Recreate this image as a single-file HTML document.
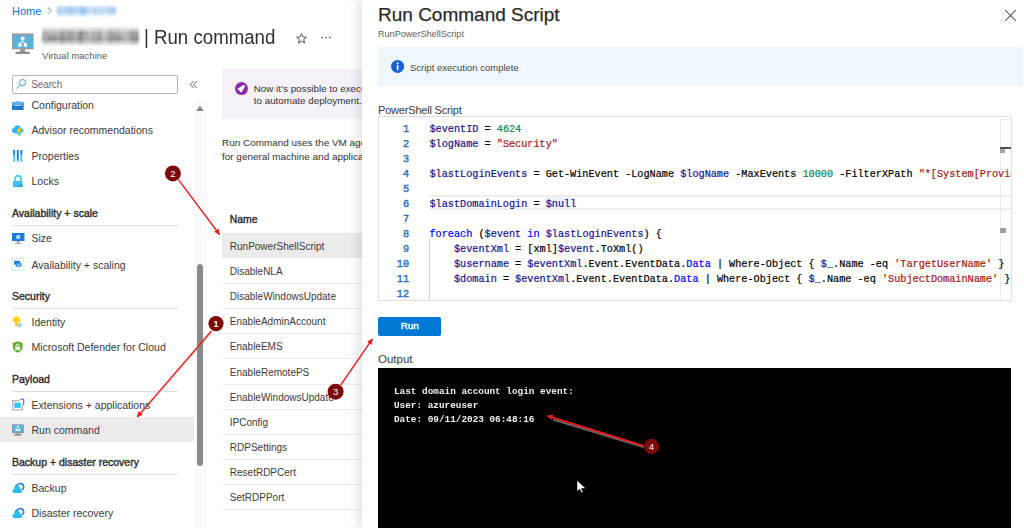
<!DOCTYPE html>
<html><head><meta charset="utf-8">
<style>
*{margin:0;padding:0;box-sizing:border-box}
html,body{width:1024px;height:528px;overflow:hidden;background:#fff}
body{position:relative;font-family:"Liberation Sans",sans-serif;color:#323130}
.a{position:absolute;white-space:pre}
.mi{position:absolute;left:31.5px;font-size:10.5px;line-height:14px;color:#3b3a39;white-space:pre}
.hd{position:absolute;left:12px;font-size:10.5px;font-weight:400;line-height:14px;color:#323130;-webkit-text-stroke:.42px #323130;white-space:pre}
.ln{position:absolute;left:12px;width:166px;height:1px;background:#e1dfdd}
.ic{position:absolute;left:12px;width:13px;height:13px}
.row{position:absolute;left:222px;width:140px;height:26px;border-bottom:1px solid #edebe9}
.row span{position:absolute;left:7.8px;top:7px;font-size:10px;line-height:14px;white-space:pre;color:#3b3a39}
#panel{position:absolute;left:362px;top:0;width:662px;height:528px;background:#fff;box-shadow:-4px 0 10px rgba(0,0,0,.11)}
.code{position:absolute;left:429.5px;font-family:"Liberation Mono",monospace;font-size:10.2px;line-height:15px;white-space:pre;color:#000;-webkit-text-stroke:.2px}
.num{position:absolute;left:380px;width:29px;text-align:right;font-family:"Liberation Mono",monospace;font-size:10.2px;font-weight:400;line-height:15px;color:#2a72c2;-webkit-text-stroke:.45px #2a72c2}
.v{color:#14148f}.k{color:#0000ff}.s{color:#a31515}.n{color:#098658}
</style></head><body>

<!-- breadcrumb -->
<div class="a" style="left:12px;top:4px;font-size:11px;line-height:14px;color:#0078d4">Home</div>
<svg class="a" style="left:46px;top:6px" width="8" height="10"><path d="M2 1.5 5 4.8 2 8" fill="none" stroke="#d6d6d6" stroke-width="2.2"/><path d="M2.2 1.5 3.4 2.8" stroke="#999" stroke-width="1"/></svg>
<svg class="a" style="left:54px;top:2.5px" width="65" height="16"><defs><filter id="b57" x="-10%" y="-30%" width="120%" height="160%"><feGaussianBlur stdDeviation="0.9"/></filter></defs><g filter="url(#b57)"><rect x="3.00" y="3.00" width="2.65" height="2.05" fill="#bfdbf4"/><rect x="5.60" y="3.00" width="2.65" height="2.05" fill="#c5def5"/><rect x="8.20" y="3.00" width="2.65" height="2.05" fill="#c7dff5"/><rect x="10.80" y="3.00" width="2.65" height="2.05" fill="#c0dbf4"/><rect x="13.40" y="3.00" width="2.65" height="2.05" fill="#bbd8f3"/><rect x="16.00" y="3.00" width="2.65" height="2.05" fill="#b1d3f2"/><rect x="18.60" y="3.00" width="2.65" height="2.05" fill="#c2dcf5"/><rect x="21.20" y="3.00" width="2.65" height="2.05" fill="#cce2f6"/><rect x="23.80" y="3.00" width="2.65" height="2.05" fill="#cbe1f6"/><rect x="26.40" y="3.00" width="2.65" height="2.05" fill="#bbd8f4"/><rect x="29.00" y="3.00" width="2.65" height="2.05" fill="#bcd9f4"/><rect x="31.60" y="3.00" width="2.65" height="2.05" fill="#c6def5"/><rect x="34.20" y="3.00" width="2.65" height="2.05" fill="#daeaf9"/><rect x="36.80" y="3.00" width="2.65" height="2.05" fill="#d9e9f8"/><rect x="39.40" y="3.00" width="2.65" height="2.05" fill="#cde2f6"/><rect x="42.00" y="3.00" width="2.65" height="2.05" fill="#d0e4f7"/><rect x="44.60" y="3.00" width="2.65" height="2.05" fill="#d7e8f8"/><rect x="47.20" y="3.00" width="2.65" height="2.05" fill="#c8dff6"/><rect x="49.80" y="3.00" width="2.65" height="2.05" fill="#d1e5f7"/><rect x="52.40" y="3.00" width="2.65" height="2.05" fill="#cde2f6"/><rect x="55.00" y="3.00" width="2.65" height="2.05" fill="#c8e0f6"/><rect x="57.60" y="3.00" width="2.65" height="2.05" fill="#c0dbf4"/><rect x="60.20" y="3.00" width="1.85" height="2.05" fill="#c7dff5"/><rect x="3.00" y="5.00" width="2.65" height="5.55" fill="#aacff1"/><rect x="5.60" y="5.00" width="2.65" height="5.55" fill="#abcff1"/><rect x="8.20" y="5.00" width="2.65" height="5.55" fill="#b7d6f3"/><rect x="10.80" y="5.00" width="2.65" height="5.55" fill="#add0f1"/><rect x="13.40" y="5.00" width="2.65" height="5.55" fill="#a0c9ef"/><rect x="16.00" y="5.00" width="2.65" height="5.55" fill="#a6ccf0"/><rect x="18.60" y="5.00" width="2.65" height="5.55" fill="#a4cbf0"/><rect x="21.20" y="5.00" width="2.65" height="5.55" fill="#b3d4f2"/><rect x="23.80" y="5.00" width="2.65" height="5.55" fill="#acd0f1"/><rect x="26.40" y="5.00" width="2.65" height="5.55" fill="#8bbdec"/><rect x="29.00" y="5.00" width="2.65" height="5.55" fill="#90c0ed"/><rect x="31.60" y="5.00" width="2.65" height="5.55" fill="#b0d2f2"/><rect x="34.20" y="5.00" width="2.65" height="5.55" fill="#c4ddf5"/><rect x="36.80" y="5.00" width="2.65" height="5.55" fill="#c3ddf5"/><rect x="39.40" y="5.00" width="2.65" height="5.55" fill="#a4cbf0"/><rect x="42.00" y="5.00" width="2.65" height="5.55" fill="#c7dff6"/><rect x="44.60" y="5.00" width="2.65" height="5.55" fill="#bfdaf4"/><rect x="47.20" y="5.00" width="2.65" height="5.55" fill="#b2d3f2"/><rect x="49.80" y="5.00" width="2.65" height="5.55" fill="#c0dbf4"/><rect x="52.40" y="5.00" width="2.65" height="5.55" fill="#b6d6f3"/><rect x="55.00" y="5.00" width="2.65" height="5.55" fill="#abcff1"/><rect x="57.60" y="5.00" width="2.65" height="5.55" fill="#aacef1"/><rect x="60.20" y="5.00" width="1.85" height="5.55" fill="#a5ccf0"/><rect x="3.00" y="10.50" width="2.65" height="2.55" fill="#cbe1f6"/><rect x="5.60" y="10.50" width="2.65" height="2.55" fill="#d1e5f7"/><rect x="8.20" y="10.50" width="2.65" height="2.55" fill="#cfe3f7"/><rect x="10.80" y="10.50" width="2.65" height="2.55" fill="#d0e4f7"/><rect x="13.40" y="10.50" width="2.65" height="2.55" fill="#c4def5"/><rect x="16.00" y="10.50" width="2.65" height="2.55" fill="#c1dcf5"/><rect x="18.60" y="10.50" width="2.65" height="2.55" fill="#d1e5f7"/><rect x="21.20" y="10.50" width="2.65" height="2.55" fill="#d0e4f7"/><rect x="23.80" y="10.50" width="2.65" height="2.55" fill="#d1e4f7"/><rect x="26.40" y="10.50" width="2.65" height="2.55" fill="#bad8f3"/><rect x="29.00" y="10.50" width="2.65" height="2.55" fill="#bfdaf4"/><rect x="31.60" y="10.50" width="2.65" height="2.55" fill="#cbe1f6"/><rect x="34.20" y="10.50" width="2.65" height="2.55" fill="#daeaf9"/><rect x="36.80" y="10.50" width="2.65" height="2.55" fill="#e0edfa"/><rect x="39.40" y="10.50" width="2.65" height="2.55" fill="#cfe4f7"/><rect x="42.00" y="10.50" width="2.65" height="2.55" fill="#d7e8f8"/><rect x="44.60" y="10.50" width="2.65" height="2.55" fill="#d8e9f8"/><rect x="47.20" y="10.50" width="2.65" height="2.55" fill="#d5e7f8"/><rect x="49.80" y="10.50" width="2.65" height="2.55" fill="#deecf9"/><rect x="52.40" y="10.50" width="2.65" height="2.55" fill="#daeaf9"/><rect x="55.00" y="10.50" width="2.65" height="2.55" fill="#d6e8f8"/><rect x="57.60" y="10.50" width="2.65" height="2.55" fill="#d4e6f8"/><rect x="60.20" y="10.50" width="1.85" height="2.55" fill="#d6e8f8"/></g></svg>

<!-- VM icon -->
<svg class="a" style="left:0;top:0" width="40" height="58">
  <rect x="12" y="33.4" width="21.6" height="15.9" fill="#9a9a9a"/>
  <rect x="13.1" y="35.2" width="19.9" height="12.8" fill="#5cb2dc"/>
  <rect x="20.2" y="49.3" width="4.8" height="2.8" fill="#8c8c8c"/>
  <rect x="15.4" y="51.8" width="14.5" height="2.1" rx="1" fill="#8c8c8c"/>
  <circle cx="22.7" cy="38.3" r="1.9" fill="#fff"/>
  <rect x="22.2" y="39.5" width="1" height="2.4" fill="#fff"/>
  <path d="M19.6 43.5 22.7 41.4 25.6 43.5" fill="none" stroke="#fff" stroke-width="1"/>
  <rect x="18.2" y="43.3" width="3.4" height="3.5" fill="#fff"/>
  <rect x="23.8" y="43.3" width="3.2" height="3.5" fill="#fff"/>
</svg>
<svg class="a" style="left:39px;top:23px" width="103" height="26"><defs><filter id="b42" x="-10%" y="-30%" width="120%" height="160%"><feGaussianBlur stdDeviation="1.0"/></filter></defs><g filter="url(#b42)"><rect x="3.00" y="3.00" width="2.65" height="2.55" fill="#f5f5f5"/><rect x="5.60" y="3.00" width="2.65" height="2.55" fill="#f5f5f5"/><rect x="8.20" y="3.00" width="2.65" height="2.55" fill="#f4f4f4"/><rect x="10.80" y="3.00" width="2.65" height="2.55" fill="#f5f5f5"/><rect x="13.40" y="3.00" width="2.65" height="2.55" fill="#f4f4f4"/><rect x="16.00" y="3.00" width="2.65" height="2.55" fill="#f4f4f4"/><rect x="18.60" y="3.00" width="2.65" height="2.55" fill="#f5f5f5"/><rect x="21.20" y="3.00" width="2.65" height="2.55" fill="#f1f1f1"/><rect x="23.80" y="3.00" width="2.65" height="2.55" fill="#f3f3f3"/><rect x="26.40" y="3.00" width="2.65" height="2.55" fill="#f4f4f4"/><rect x="29.00" y="3.00" width="2.65" height="2.55" fill="#f4f4f4"/><rect x="31.60" y="3.00" width="2.65" height="2.55" fill="#f3f3f3"/><rect x="34.20" y="3.00" width="2.65" height="2.55" fill="#f4f4f4"/><rect x="36.80" y="3.00" width="2.65" height="2.55" fill="#f3f3f3"/><rect x="39.40" y="3.00" width="2.65" height="2.55" fill="#f2f2f2"/><rect x="42.00" y="3.00" width="2.65" height="2.55" fill="#f2f2f2"/><rect x="44.60" y="3.00" width="2.65" height="2.55" fill="#f4f4f4"/><rect x="47.20" y="3.00" width="2.65" height="2.55" fill="#f3f3f3"/><rect x="49.80" y="3.00" width="2.65" height="2.55" fill="#f6f6f6"/><rect x="52.40" y="3.00" width="2.65" height="2.55" fill="#f4f4f4"/><rect x="55.00" y="3.00" width="2.65" height="2.55" fill="#f2f2f2"/><rect x="57.60" y="3.00" width="2.65" height="2.55" fill="#f5f5f5"/><rect x="60.20" y="3.00" width="2.65" height="2.55" fill="#f3f3f3"/><rect x="62.80" y="3.00" width="2.65" height="2.55" fill="#f6f6f6"/><rect x="65.40" y="3.00" width="2.65" height="2.55" fill="#f7f7f7"/><rect x="68.00" y="3.00" width="2.65" height="2.55" fill="#f5f5f5"/><rect x="70.60" y="3.00" width="2.65" height="2.55" fill="#f3f3f3"/><rect x="73.20" y="3.00" width="2.65" height="2.55" fill="#f1f1f1"/><rect x="75.80" y="3.00" width="2.65" height="2.55" fill="#f5f5f5"/><rect x="78.40" y="3.00" width="2.65" height="2.55" fill="#f4f4f4"/><rect x="81.00" y="3.00" width="2.65" height="2.55" fill="#f4f4f4"/><rect x="83.60" y="3.00" width="2.65" height="2.55" fill="#f6f6f6"/><rect x="86.20" y="3.00" width="2.65" height="2.55" fill="#f5f5f5"/><rect x="88.80" y="3.00" width="2.65" height="2.55" fill="#f5f5f5"/><rect x="91.40" y="3.00" width="2.65" height="2.55" fill="#f4f4f4"/><rect x="94.00" y="3.00" width="2.65" height="2.55" fill="#f3f3f3"/><rect x="96.60" y="3.00" width="2.65" height="2.55" fill="#f2f2f2"/><rect x="99.20" y="3.00" width="0.85" height="2.55" fill="#f4f4f4"/><rect x="3.00" y="5.50" width="2.65" height="3.05" fill="#d5d5d5"/><rect x="5.60" y="5.50" width="2.65" height="3.05" fill="#d2d2d2"/><rect x="8.20" y="5.50" width="2.65" height="3.05" fill="#d3d3d3"/><rect x="10.80" y="5.50" width="2.65" height="3.05" fill="#d5d5d5"/><rect x="13.40" y="5.50" width="2.65" height="3.05" fill="#cfcfcf"/><rect x="16.00" y="5.50" width="2.65" height="3.05" fill="#d0d0d0"/><rect x="18.60" y="5.50" width="2.65" height="3.05" fill="#d6d6d6"/><rect x="21.20" y="5.50" width="2.65" height="3.05" fill="#c7c7c7"/><rect x="23.80" y="5.50" width="2.65" height="3.05" fill="#c7c7c7"/><rect x="26.40" y="5.50" width="2.65" height="3.05" fill="#cecece"/><rect x="29.00" y="5.50" width="2.65" height="3.05" fill="#c6c6c6"/><rect x="31.60" y="5.50" width="2.65" height="3.05" fill="#cdcdcd"/><rect x="34.20" y="5.50" width="2.65" height="3.05" fill="#cccccc"/><rect x="36.80" y="5.50" width="2.65" height="3.05" fill="#d8d8d8"/><rect x="39.40" y="5.50" width="2.65" height="3.05" fill="#c7c7c7"/><rect x="42.00" y="5.50" width="2.65" height="3.05" fill="#c1c1c1"/><rect x="44.60" y="5.50" width="2.65" height="3.05" fill="#d7d7d7"/><rect x="47.20" y="5.50" width="2.65" height="3.05" fill="#d3d3d3"/><rect x="49.80" y="5.50" width="2.65" height="3.05" fill="#e0e0e0"/><rect x="52.40" y="5.50" width="2.65" height="3.05" fill="#d1d1d1"/><rect x="55.00" y="5.50" width="2.65" height="3.05" fill="#cfcfcf"/><rect x="57.60" y="5.50" width="2.65" height="3.05" fill="#d2d2d2"/><rect x="60.20" y="5.50" width="2.65" height="3.05" fill="#cecece"/><rect x="62.80" y="5.50" width="2.65" height="3.05" fill="#dddddd"/><rect x="65.40" y="5.50" width="2.65" height="3.05" fill="#d9d9d9"/><rect x="68.00" y="5.50" width="2.65" height="3.05" fill="#d2d2d2"/><rect x="70.60" y="5.50" width="2.65" height="3.05" fill="#c9c9c9"/><rect x="73.20" y="5.50" width="2.65" height="3.05" fill="#cbcbcb"/><rect x="75.80" y="5.50" width="2.65" height="3.05" fill="#cecece"/><rect x="78.40" y="5.50" width="2.65" height="3.05" fill="#cdcdcd"/><rect x="81.00" y="5.50" width="2.65" height="3.05" fill="#d3d3d3"/><rect x="83.60" y="5.50" width="2.65" height="3.05" fill="#d7d7d7"/><rect x="86.20" y="5.50" width="2.65" height="3.05" fill="#dedede"/><rect x="88.80" y="5.50" width="2.65" height="3.05" fill="#d0d0d0"/><rect x="91.40" y="5.50" width="2.65" height="3.05" fill="#cacaca"/><rect x="94.00" y="5.50" width="2.65" height="3.05" fill="#c5c5c5"/><rect x="96.60" y="5.50" width="2.65" height="3.05" fill="#c7c7c7"/><rect x="99.20" y="5.50" width="0.85" height="3.05" fill="#d6d6d6"/><rect x="3.00" y="8.50" width="2.65" height="4.05" fill="#aaaaaa"/><rect x="5.60" y="8.50" width="2.65" height="4.05" fill="#a3a3a3"/><rect x="8.20" y="8.50" width="2.65" height="4.05" fill="#b4b4b4"/><rect x="10.80" y="8.50" width="2.65" height="4.05" fill="#a8a8a8"/><rect x="13.40" y="8.50" width="2.65" height="4.05" fill="#b0b0b0"/><rect x="16.00" y="8.50" width="2.65" height="4.05" fill="#b1b1b1"/><rect x="18.60" y="8.50" width="2.65" height="4.05" fill="#b3b3b3"/><rect x="21.20" y="8.50" width="2.65" height="4.05" fill="#888888"/><rect x="23.80" y="8.50" width="2.65" height="4.05" fill="#9d9d9d"/><rect x="26.40" y="8.50" width="2.65" height="4.05" fill="#aeaeae"/><rect x="29.00" y="8.50" width="2.65" height="4.05" fill="#999999"/><rect x="31.60" y="8.50" width="2.65" height="4.05" fill="#8a8a8a"/><rect x="34.20" y="8.50" width="2.65" height="4.05" fill="#b2b2b2"/><rect x="36.80" y="8.50" width="2.65" height="4.05" fill="#a8a8a8"/><rect x="39.40" y="8.50" width="2.65" height="4.05" fill="#8b8b8b"/><rect x="42.00" y="8.50" width="2.65" height="4.05" fill="#808080"/><rect x="44.60" y="8.50" width="2.65" height="4.05" fill="#9f9f9f"/><rect x="47.20" y="8.50" width="2.65" height="4.05" fill="#9d9d9d"/><rect x="49.80" y="8.50" width="2.65" height="4.05" fill="#bdbdbd"/><rect x="52.40" y="8.50" width="2.65" height="4.05" fill="#a9a9a9"/><rect x="55.00" y="8.50" width="2.65" height="4.05" fill="#ababab"/><rect x="57.60" y="8.50" width="2.65" height="4.05" fill="#9d9d9d"/><rect x="60.20" y="8.50" width="2.65" height="4.05" fill="#9b9b9b"/><rect x="62.80" y="8.50" width="2.65" height="4.05" fill="#bebebe"/><rect x="65.40" y="8.50" width="2.65" height="4.05" fill="#bebebe"/><rect x="68.00" y="8.50" width="2.65" height="4.05" fill="#aeaeae"/><rect x="70.60" y="8.50" width="2.65" height="4.05" fill="#9e9e9e"/><rect x="73.20" y="8.50" width="2.65" height="4.05" fill="#969696"/><rect x="75.80" y="8.50" width="2.65" height="4.05" fill="#a5a5a5"/><rect x="78.40" y="8.50" width="2.65" height="4.05" fill="#adadad"/><rect x="81.00" y="8.50" width="2.65" height="4.05" fill="#b4b4b4"/><rect x="83.60" y="8.50" width="2.65" height="4.05" fill="#b6b6b6"/><rect x="86.20" y="8.50" width="2.65" height="4.05" fill="#b7b7b7"/><rect x="88.80" y="8.50" width="2.65" height="4.05" fill="#a5a5a5"/><rect x="91.40" y="8.50" width="2.65" height="4.05" fill="#8c8c8c"/><rect x="94.00" y="8.50" width="2.65" height="4.05" fill="#949494"/><rect x="96.60" y="8.50" width="2.65" height="4.05" fill="#999999"/><rect x="99.20" y="8.50" width="0.85" height="4.05" fill="#a4a4a4"/><rect x="3.00" y="12.50" width="2.65" height="6.05" fill="#949494"/><rect x="5.60" y="12.50" width="2.65" height="6.05" fill="#a7a7a7"/><rect x="8.20" y="12.50" width="2.65" height="6.05" fill="#8d8d8d"/><rect x="10.80" y="12.50" width="2.65" height="6.05" fill="#909090"/><rect x="13.40" y="12.50" width="2.65" height="6.05" fill="#8e8e8e"/><rect x="16.00" y="12.50" width="2.65" height="6.05" fill="#909090"/><rect x="18.60" y="12.50" width="2.65" height="6.05" fill="#9c9c9c"/><rect x="21.20" y="12.50" width="2.65" height="6.05" fill="#838383"/><rect x="23.80" y="12.50" width="2.65" height="6.05" fill="#8f8f8f"/><rect x="26.40" y="12.50" width="2.65" height="6.05" fill="#959595"/><rect x="29.00" y="12.50" width="2.65" height="6.05" fill="#959595"/><rect x="31.60" y="12.50" width="2.65" height="6.05" fill="#959595"/><rect x="34.20" y="12.50" width="2.65" height="6.05" fill="#a2a2a2"/><rect x="36.80" y="12.50" width="2.65" height="6.05" fill="#a3a3a3"/><rect x="39.40" y="12.50" width="2.65" height="6.05" fill="#818181"/><rect x="42.00" y="12.50" width="2.65" height="6.05" fill="#8c8c8c"/><rect x="44.60" y="12.50" width="2.65" height="6.05" fill="#a8a8a8"/><rect x="47.20" y="12.50" width="2.65" height="6.05" fill="#a4a4a4"/><rect x="49.80" y="12.50" width="2.65" height="6.05" fill="#b7b7b7"/><rect x="52.40" y="12.50" width="2.65" height="6.05" fill="#9d9d9d"/><rect x="55.00" y="12.50" width="2.65" height="6.05" fill="#a7a7a7"/><rect x="57.60" y="12.50" width="2.65" height="6.05" fill="#8e8e8e"/><rect x="60.20" y="12.50" width="2.65" height="6.05" fill="#969696"/><rect x="62.80" y="12.50" width="2.65" height="6.05" fill="#b4b4b4"/><rect x="65.40" y="12.50" width="2.65" height="6.05" fill="#b1b1b1"/><rect x="68.00" y="12.50" width="2.65" height="6.05" fill="#9e9e9e"/><rect x="70.60" y="12.50" width="2.65" height="6.05" fill="#8a8a8a"/><rect x="73.20" y="12.50" width="2.65" height="6.05" fill="#929292"/><rect x="75.80" y="12.50" width="2.65" height="6.05" fill="#8e8e8e"/><rect x="78.40" y="12.50" width="2.65" height="6.05" fill="#8a8a8a"/><rect x="81.00" y="12.50" width="2.65" height="6.05" fill="#9a9a9a"/><rect x="83.60" y="12.50" width="2.65" height="6.05" fill="#a9a9a9"/><rect x="86.20" y="12.50" width="2.65" height="6.05" fill="#b3b3b3"/><rect x="88.80" y="12.50" width="2.65" height="6.05" fill="#a5a5a5"/><rect x="91.40" y="12.50" width="2.65" height="6.05" fill="#8f8f8f"/><rect x="94.00" y="12.50" width="2.65" height="6.05" fill="#929292"/><rect x="96.60" y="12.50" width="2.65" height="6.05" fill="#7e7e7e"/><rect x="99.20" y="12.50" width="0.85" height="6.05" fill="#a3a3a3"/><rect x="3.00" y="18.50" width="2.65" height="2.55" fill="#d2d2d2"/><rect x="5.60" y="18.50" width="2.65" height="2.55" fill="#c3c3c3"/><rect x="8.20" y="18.50" width="2.65" height="2.55" fill="#cacaca"/><rect x="10.80" y="18.50" width="2.65" height="2.55" fill="#d0d0d0"/><rect x="13.40" y="18.50" width="2.65" height="2.55" fill="#c9c9c9"/><rect x="16.00" y="18.50" width="2.65" height="2.55" fill="#d1d1d1"/><rect x="18.60" y="18.50" width="2.65" height="2.55" fill="#cacaca"/><rect x="21.20" y="18.50" width="2.65" height="2.55" fill="#b3b3b3"/><rect x="23.80" y="18.50" width="2.65" height="2.55" fill="#b6b6b6"/><rect x="26.40" y="18.50" width="2.65" height="2.55" fill="#c7c7c7"/><rect x="29.00" y="18.50" width="2.65" height="2.55" fill="#c4c4c4"/><rect x="31.60" y="18.50" width="2.65" height="2.55" fill="#c2c2c2"/><rect x="34.20" y="18.50" width="2.65" height="2.55" fill="#cfcfcf"/><rect x="36.80" y="18.50" width="2.65" height="2.55" fill="#c6c6c6"/><rect x="39.40" y="18.50" width="2.65" height="2.55" fill="#bababa"/><rect x="42.00" y="18.50" width="2.65" height="2.55" fill="#b5b5b5"/><rect x="44.60" y="18.50" width="2.65" height="2.55" fill="#cdcdcd"/><rect x="47.20" y="18.50" width="2.65" height="2.55" fill="#cecece"/><rect x="49.80" y="18.50" width="2.65" height="2.55" fill="#d1d1d1"/><rect x="52.40" y="18.50" width="2.65" height="2.55" fill="#c2c2c2"/><rect x="55.00" y="18.50" width="2.65" height="2.55" fill="#c4c4c4"/><rect x="57.60" y="18.50" width="2.65" height="2.55" fill="#c5c5c5"/><rect x="60.20" y="18.50" width="2.65" height="2.55" fill="#c5c5c5"/><rect x="62.80" y="18.50" width="2.65" height="2.55" fill="#d0d0d0"/><rect x="65.40" y="18.50" width="2.65" height="2.55" fill="#d7d7d7"/><rect x="68.00" y="18.50" width="2.65" height="2.55" fill="#cacaca"/><rect x="70.60" y="18.50" width="2.65" height="2.55" fill="#c2c2c2"/><rect x="73.20" y="18.50" width="2.65" height="2.55" fill="#c8c8c8"/><rect x="75.80" y="18.50" width="2.65" height="2.55" fill="#d1d1d1"/><rect x="78.40" y="18.50" width="2.65" height="2.55" fill="#cdcdcd"/><rect x="81.00" y="18.50" width="2.65" height="2.55" fill="#cecece"/><rect x="83.60" y="18.50" width="2.65" height="2.55" fill="#cfcfcf"/><rect x="86.20" y="18.50" width="2.65" height="2.55" fill="#cccccc"/><rect x="88.80" y="18.50" width="2.65" height="2.55" fill="#cbcbcb"/><rect x="91.40" y="18.50" width="2.65" height="2.55" fill="#bababa"/><rect x="94.00" y="18.50" width="2.65" height="2.55" fill="#b9b9b9"/><rect x="96.60" y="18.50" width="2.65" height="2.55" fill="#bababa"/><rect x="99.20" y="18.50" width="0.85" height="2.55" fill="#cccccc"/><rect x="3.00" y="21.00" width="2.65" height="2.05" fill="#f2f2f2"/><rect x="5.60" y="21.00" width="2.65" height="2.05" fill="#f2f2f2"/><rect x="8.20" y="21.00" width="2.65" height="2.05" fill="#f2f2f2"/><rect x="10.80" y="21.00" width="2.65" height="2.05" fill="#f2f2f2"/><rect x="13.40" y="21.00" width="2.65" height="2.05" fill="#f0f0f0"/><rect x="16.00" y="21.00" width="2.65" height="2.05" fill="#efefef"/><rect x="18.60" y="21.00" width="2.65" height="2.05" fill="#efefef"/><rect x="21.20" y="21.00" width="2.65" height="2.05" fill="#ededed"/><rect x="23.80" y="21.00" width="2.65" height="2.05" fill="#ececec"/><rect x="26.40" y="21.00" width="2.65" height="2.05" fill="#efefef"/><rect x="29.00" y="21.00" width="2.65" height="2.05" fill="#f0f0f0"/><rect x="31.60" y="21.00" width="2.65" height="2.05" fill="#ededed"/><rect x="34.20" y="21.00" width="2.65" height="2.05" fill="#efefef"/><rect x="36.80" y="21.00" width="2.65" height="2.05" fill="#efefef"/><rect x="39.40" y="21.00" width="2.65" height="2.05" fill="#ebebeb"/><rect x="42.00" y="21.00" width="2.65" height="2.05" fill="#ececec"/><rect x="44.60" y="21.00" width="2.65" height="2.05" fill="#f2f2f2"/><rect x="47.20" y="21.00" width="2.65" height="2.05" fill="#efefef"/><rect x="49.80" y="21.00" width="2.65" height="2.05" fill="#f4f4f4"/><rect x="52.40" y="21.00" width="2.65" height="2.05" fill="#efefef"/><rect x="55.00" y="21.00" width="2.65" height="2.05" fill="#efefef"/><rect x="57.60" y="21.00" width="2.65" height="2.05" fill="#f1f1f1"/><rect x="60.20" y="21.00" width="2.65" height="2.05" fill="#f1f1f1"/><rect x="62.80" y="21.00" width="2.65" height="2.05" fill="#f1f1f1"/><rect x="65.40" y="21.00" width="2.65" height="2.05" fill="#f2f2f2"/><rect x="68.00" y="21.00" width="2.65" height="2.05" fill="#f2f2f2"/><rect x="70.60" y="21.00" width="2.65" height="2.05" fill="#f0f0f0"/><rect x="73.20" y="21.00" width="2.65" height="2.05" fill="#efefef"/><rect x="75.80" y="21.00" width="2.65" height="2.05" fill="#efefef"/><rect x="78.40" y="21.00" width="2.65" height="2.05" fill="#efefef"/><rect x="81.00" y="21.00" width="2.65" height="2.05" fill="#f2f2f2"/><rect x="83.60" y="21.00" width="2.65" height="2.05" fill="#f1f1f1"/><rect x="86.20" y="21.00" width="2.65" height="2.05" fill="#f1f1f1"/><rect x="88.80" y="21.00" width="2.65" height="2.05" fill="#f0f0f0"/><rect x="91.40" y="21.00" width="2.65" height="2.05" fill="#efefef"/><rect x="94.00" y="21.00" width="2.65" height="2.05" fill="#eeeeee"/><rect x="96.60" y="21.00" width="2.65" height="2.05" fill="#f0f0f0"/><rect x="99.20" y="21.00" width="0.85" height="2.05" fill="#f3f3f3"/></g></svg>
<div class="a" style="left:144px;top:26.2px;font-size:19.6px;line-height:22px;color:#323130;transform:scaleX(.952);transform-origin:0 0">| Run command</div>
<svg class="a" style="left:295.5px;top:32.5px" width="11" height="11" viewBox="0 0 12 12"><path d="M6 .8 7.5 4.3 11.3 4.6 8.4 7.1 9.3 10.9 6 8.9 2.7 10.9 3.6 7.1 .7 4.6 4.5 4.3Z" fill="none" stroke="#323130" stroke-width=".9" stroke-linejoin="round"/></svg>
<svg class="a" style="left:318px;top:34px" width="16" height="8"><circle cx="4.2" cy="3.5" r=".85" fill="#444"/><circle cx="8.1" cy="3.5" r=".85" fill="#444"/><circle cx="12" cy="3.5" r=".85" fill="#444"/></svg>
<div class="a" style="left:42px;top:50px;font-size:9.5px;line-height:12px;color:#605e5c">Virtual machine</div>

<!-- search -->
<div class="a" style="left:11.5px;top:75px;width:166.5px;height:19px;border:1px solid #b5b3b1;border-radius:2px"></div>
<svg class="a" style="left:15px;top:78px" width="12" height="12" viewBox="0 0 12 12"><circle cx="7.6" cy="4.5" r="3.1" fill="none" stroke="#3b8fdc" stroke-width=".9"/><line x1="5.3" y1="6.8" x2="1.6" y2="10.6" stroke="#3b8fdc" stroke-width="1"/></svg>
<div class="a" style="left:31.3px;top:77.6px;font-size:10px;line-height:14px;color:#6e6c6a;letter-spacing:-.15px">Search</div>
<svg class="a" style="left:189px;top:80px" width="9" height="9"><path d="M4.5 1 1.5 4.5 4.5 8M7.8 1 4.8 4.5 7.8 8" fill="none" stroke="#605e5c" stroke-width=".9"/></svg>

<!-- scrollbar -->
<div class="a" style="left:194px;top:99px;width:12.5px;height:429px;background:#fafafa"></div>
<svg class="a" style="left:195px;top:104px" width="10" height="8"><polygon points="1.2,7 5,1.8 8.8,7" fill="#868686"/></svg>
<div class="a" style="left:196.5px;top:264px;width:6.8px;height:202px;background:#8a8a8a;border-radius:3.4px"></div>

<!-- menu -->
<svg class="ic" style="top:100px" viewBox="0 0 13 13"><rect x="0" y="2" width="11.6" height="8" fill="#1e78d2"/><rect x="0" y="2" width="11.6" height="3.2" fill="#5aaef0"/><rect x="3.5" y="1" width="4.6" height="1.2" fill="#8cc6f2"/><rect x="2.5" y="5.2" width="6.6" height=".8" fill="#cfe6fb"/></svg>
<div class="mi" style="top:98px">Configuration</div>
<svg class="ic" style="top:124px" viewBox="0 0 13 13"><path d="M5.4 9.2 6.2 11.4H8.6L9.2 9.2Z" fill="#45d3b5"/><circle cx="5.5" cy="4.3" r="3.1" fill="#32b9e6"/><circle cx="2.6" cy="6.5" r="2.7" fill="#32b9e6"/><circle cx="9" cy="6.6" r="2.3" fill="#32b9e6"/><rect x="2.5" y="5.5" width="6.5" height="3.8" fill="#32b9e6"/><circle cx="7.1" cy="6.5" r="2.2" fill="#ffc800"/></svg>
<div class="mi" style="top:122.75px">Advisor recommendations</div>
<svg class="ic" style="top:150px" viewBox="0 0 13 13"><rect x="1.2" y="0" width="1.7" height="11.8" fill="#3cc6f0"/><rect x="1.2" y="0" width="1.7" height="4.6" fill="#1f7ad7"/><rect x="4.9" y="0" width="1.7" height="11.8" fill="#3cc6f0"/><rect x="4.9" y="0" width="1.7" height="9.6" fill="#1f7ad7"/><rect x="8.5" y="0" width="1.7" height="11.8" fill="#3cc6f0"/><rect x="8.5" y="0" width="1.7" height="4.6" fill="#1f7ad7"/></svg>
<div class="mi" style="top:149px">Properties</div>
<svg class="ic" style="top:174px" viewBox="0 0 13 13"><path d="M3.2 7V4.6a2.9 2.9 0 0 1 5.8 0V7" fill="none" stroke="#4fd0f5" stroke-width="1.9"/><rect x="0.9" y="6.9" width="9.5" height="6.2" fill="#3cc4ee"/><path d="M10.4 9.5V13.1H2.5Z" fill="#2aa3d6"/></svg>
<div class="mi" style="top:174px">Locks</div>

<div class="hd" style="top:206.25px">Availability + scale</div>
<div class="ln" style="top:225px"></div>
<svg class="ic" style="top:233px" viewBox="0 0 13 13"><rect x="0" y="0" width="12.5" height="8" fill="#1f7ad7"/><circle cx="6.2" cy="4" r="2.2" fill="#a6dcf8"/><rect x="5" y="8" width="2.5" height="1.5" fill="#888"/><rect x="3" y="9.8" width="6.5" height="1" fill="#999"/></svg>
<div class="mi" style="top:231.25px">Size</div>
<svg class="a" style="left:10px;top:256px" width="16" height="16" viewBox="0 0 16 16"><rect x="1.9" y="2.4" width="12" height="12" fill="none" stroke="#a9d4f5" stroke-width=".9" stroke-dasharray="1.2 .9"/><rect x="4.1" y="4.8" width="5.8" height="3.9" fill="#1f7ad7"/><rect x="5.8" y="7" width="5.8" height="3.7" fill="#3a9be9"/><circle cx="8.7" cy="8.8" r="1" fill="#9fd8fb"/><rect x="8.2" y="10.7" width="1" height=".9" fill="#a08070"/></svg>
<div class="mi" style="top:257.5px">Availability + scaling</div>

<div class="hd" style="top:289px">Security</div>
<div class="ln" style="top:308px"></div>
<svg class="ic" style="top:315px" viewBox="0 0 13 13"><path d="M4.5 1.2 7.9 3.6 8.1 5.8 4.5 8.2 1 5.8 1.1 3.6Z" fill="#fcd116" stroke="#fcd116" stroke-width=".8" stroke-linejoin="round"/><rect x="3.2" y="7.5" width="2.3" height="4" fill="#f2c811"/><rect x="5.8" y="8.3" width="3.6" height="3.6" transform="rotate(45 7.6 10.1)" fill="#8cd0ee"/></svg>
<div class="mi" style="top:315px">Identity</div>
<svg class="ic" style="top:340px" viewBox="0 0 13 13"><path d="M5.7 1.2 10.6 3V7C10.6 9.9 8.2 11.7 5.7 12.8 3.2 11.7 0.8 9.9 0.8 7V3Z" fill="#62ad2f"/><rect x="3.3" y="6.6" width="4.8" height="3.4" fill="#f0f8ea"/><path d="M4.2 6.8V5.6a1.5 1.5 0 0 1 3 0V6.8" fill="none" stroke="#d5ecc5" stroke-width="1.1"/></svg>
<div class="mi" style="top:339.5px">Microsoft Defender for Cloud</div>

<div class="hd" style="top:372.25px">Payload</div>
<div class="ln" style="top:391px"></div>
<svg class="ic" style="top:398px" viewBox="0 0 13 13"><path d="M7.6 2.6H0.7V11.8H10.4V6.4" fill="none" stroke="#b4b4b4" stroke-width="1.3"/><rect x="2.3" y="4.6" width="6.5" height="5.3" fill="#32c8f0"/><path d="M8.2 1.3H11.7V7" fill="none" stroke="#8a3fd8" stroke-width="1.1"/></svg>
<div class="mi" style="top:398px">Extensions + applications</div>
<div class="a" style="left:0;top:417px;width:194px;height:25px;background:#edebe9"></div>
<svg class="ic" style="top:423px" viewBox="0 0 13 13"><rect x="-0.2" y="1.4" width="12" height="8.7" fill="#8a8a8a"/><rect x="0.5" y="2" width="10.6" height="7.4" fill="#5ab4dc"/><rect x="4.8" y="10.1" width="2" height="1.2" fill="#777"/><rect x="2.2" y="11.2" width="7.3" height="1.3" fill="#777"/><circle cx="5.8" cy="3.6" r=".9" fill="#fff"/><rect x="3.5" y="6" width="1.9" height="2" fill="#fff"/><rect x="6.3" y="6" width="1.9" height="2" fill="#fff"/><path d="M4.4 6 5.8 4.5 7.2 6" stroke="#fff" stroke-width=".6" fill="none"/></svg>
<div class="mi" style="top:423px">Run command</div>

<div class="hd" style="top:455px">Backup + disaster recovery</div>
<div class="ln" style="top:474px"></div>
<svg class="ic" style="top:482px" viewBox="0 0 13 13"><path d="M4 6.5A2 2 0 0 1 5.6 3.2 3.2 3.2 0 0 1 11.6 4.6 2.3 2.3 0 0 1 9.5 7.5" fill="none" stroke="#2a84dc" stroke-width="1.7"/><circle cx="5.2" cy="7" r="3.1" fill="#2bc0e6"/><circle cx="2.4" cy="9" r="2.1" fill="#2bc0e6"/><rect x="2.2" y="8.4" width="7" height="2.7" rx="1.2" fill="#2bb8e2"/><circle cx="8" cy="8.8" r="1.9" fill="#2bb8e2"/></svg>
<div class="mi" style="top:481px">Backup</div>
<svg class="ic" style="top:507px" viewBox="0 0 13 13"><path d="M4 6.5A2 2 0 0 1 5.6 3.2 3.2 3.2 0 0 1 11.6 4.6 2.3 2.3 0 0 1 9.5 7.5" fill="none" stroke="#2a84dc" stroke-width="1.7"/><circle cx="5.2" cy="7" r="3.1" fill="#2bc0e6"/><circle cx="2.4" cy="9" r="2.1" fill="#2bc0e6"/><rect x="2.2" y="8.4" width="7" height="2.7" rx="1.2" fill="#2bb8e2"/><circle cx="8" cy="8.8" r="1.9" fill="#2bb8e2"/></svg>
<div class="mi" style="top:505.6px">Disaster recovery</div>

<!-- content left -->
<div class="a" style="left:222px;top:69px;width:150px;height:50px;background:#f7f2fa"></div>
<svg class="a" style="left:234px;top:81px" width="15" height="15" viewBox="0 0 15 15"><circle cx="7.5" cy="7.6" r="6.5" fill="#8a2dab"/><path d="M11 4 10.3 7 9.3 8.3 7.2 11.8 6.2 10.6 4.4 8.8 3.2 7.9 6.7 5.7 8 4.7Z" fill="#fff"/></svg>
<div class="a" style="left:253.8px;top:83px;font-size:9.8px;line-height:11.8px;color:#323130">Now it&#8217;s possible to execute
to automate deployment.</div>
<div class="a" style="left:222px;top:136.1px;font-size:9.95px;line-height:13.6px;color:#323130">Run Command uses the VM agent
for general machine and application</div>
<div class="a" style="left:229.8px;top:213.25px;font-size:10.4px;font-weight:400;-webkit-text-stroke:.42px #323130;line-height:14px;color:#323130">Name</div>
<div class="row" style="top:233px;height:25px;background:#edebe9;border-bottom:none"><span>RunPowerShellScript</span></div>
<div class="row" style="top:258.1px"><span>DisableNLA</span></div>
<div class="row" style="top:283.2px"><span>DisableWindowsUpdate</span></div>
<div class="row" style="top:308.3px"><span>EnableAdminAccount</span></div>
<div class="row" style="top:333.4px"><span>EnableEMS</span></div>
<div class="row" style="top:358.5px"><span>EnableRemotePS</span></div>
<div class="row" style="top:383.6px"><span>EnableWindowsUpdate</span></div>
<div class="row" style="top:408.7px"><span>IPConfig</span></div>
<div class="row" style="top:433.8px"><span>RDPSettings</span></div>
<div class="row" style="top:458.9px"><span>ResetRDPCert</span></div>
<div class="row" style="top:484.0px"><span>SetRDPPort</span></div>

<!-- right panel -->
<div id="panel"></div>
<div class="a" style="left:378px;top:4.2px;font-size:19px;line-height:22px;color:#2b2a29;-webkit-text-stroke:.25px #2b2a29">Run Command Script</div>
<svg class="a" style="left:1004px;top:9px" width="13" height="13"><path d="M1.2 1.2 11.8 11.8M11.8 1.2 1.2 11.8" stroke="#605e5c" stroke-width="1.1"/></svg>
<div class="a" style="left:378px;top:28px;font-size:9.1px;line-height:12px;color:#605e5c">RunPowerShellScript</div>
<div class="a" style="left:378px;top:47px;width:645px;height:38.5px;background:#eff6fc"></div>
<svg class="a" style="left:390px;top:59px" width="15" height="15" viewBox="0 0 15 15"><circle cx="7.6" cy="7.4" r="6.5" fill="#1760d6"/><circle cx="7.6" cy="4.3" r="1" fill="#fff"/><rect x="6.8" y="6" width="1.6" height="5.2" fill="#fff"/></svg>
<div class="a" style="left:410px;top:60.6px;font-size:9.5px;line-height:13px;color:#4a4846">Script execution complete</div>
<div class="a" style="left:378px;top:103.8px;font-size:11px;line-height:13px;color:#3b3a39;letter-spacing:-.19px">PowerShell Script</div>

<!-- editor -->
<div class="a" style="left:378px;top:116px;width:633.5px;height:185px;border:1px solid #e1dfdd;background:#fffffe"></div>
<div class="a" style="left:429px;top:195px;width:582px;height:15px;border-top:2px solid #eeeeee;border-bottom:2px solid #eeeeee"></div>
<div class="a" style="left:545px;top:197px;width:31px;height:11px;background:#edf3fb"></div>
<div class="a" style="left:999.5px;top:119px;width:11.5px;height:181px;border-left:1px solid #ececec;border-top:1px solid #f0f0f0"></div>
<div class="a" style="left:1000px;top:147.3px;width:11px;height:1.6px;background:#505050"></div>
<div class="a" style="left:1000px;top:148.9px;width:5.2px;height:3.7px;background:#a6a6a6"></div>
<div class="a" style="left:1000px;top:228px;width:5.5px;height:5px;background:#a0a0a0"></div>
<div class="a" style="left:429px;top:239px;width:1px;height:61px;background:#d4d4d4"></div>

<div class="num" style="top:121.6px">1</div>
<div class="num" style="top:136.6px">2</div>
<div class="num" style="top:151.6px">3</div>
<div class="num" style="top:166.6px">4</div>
<div class="num" style="top:181.6px">5</div>
<div class="num" style="top:196.6px">6</div>
<div class="num" style="top:211.6px">7</div>
<div class="num" style="top:226.6px">8</div>
<div class="num" style="top:241.6px">9</div>
<div class="num" style="top:256.6px">10</div>
<div class="num" style="top:271.6px">11</div>
<div class="num" style="top:286.6px">12</div>

<div class="a" style="left:429.5px;top:118px;width:581.5px;height:182px;overflow:hidden">
<div class="code" style="left:0;top:3.6px"><span class="v">$eventID</span> = <span class="n">4624</span>
<span class="v">$logName</span> = <span class="s">"Security"</span>

<span class="v">$lastLoginEvents</span> = Get-WinEvent -LogName <span class="v">$logName</span> -MaxEvents <span class="n">10000</span> -FilterXPath <span class="s">"*[System[Provider[@Name='Microsoft-Windows-Security-Auditing']]]"</span>

<span class="v">$lastDomainLogin</span> = <span class="v">$null</span>

<span class="k">foreach</span> (<span class="v">$event</span> <span class="k">in</span> <span class="v">$lastLoginEvents</span>) {
    <span class="v">$eventXml</span> = [xml]<span class="v">$event</span>.ToXml()
    <span class="v">$username</span> = <span class="v">$eventXml</span>.Event.EventData.<span class="k">Data</span> | Where-Object { <span class="v">$_</span>.Name -eq <span class="s">'TargetUserName'</span> }
    <span class="v">$domain</span> = <span class="v">$eventXml</span>.Event.EventData.<span class="k">Data</span> | Where-Object { <span class="v">$_</span>.Name -eq <span class="s">'SubjectDomainName'</span> }
</div></div>

<!-- run button -->
<div class="a" style="left:378px;top:316.5px;width:63.4px;height:19.1px;background:#0078d4;border-radius:2px"></div>
<div class="a" style="left:378px;top:318.9px;width:63.4px;text-align:center;font-size:9.8px;font-weight:400;line-height:13px;color:#fff;-webkit-text-stroke:.4px #fff">Run</div>
<div class="a" style="left:378px;top:353.2px;font-size:11.5px;line-height:13px;color:#3b3a39">Output</div>
<div class="a" style="left:378px;top:368px;width:633px;height:160px;background:#000"></div>
<div class="a" style="left:394px;top:384.9px;font-family:'Liberation Mono',monospace;font-size:9.9px;font-weight:700;line-height:14px;color:#f0f0f0;transform:scaleX(.948);transform-origin:0 0">Last domain account login event:</div>
<div class="a" style="left:394px;top:399.15px;font-family:'Liberation Mono',monospace;font-size:9.9px;font-weight:700;line-height:14px;color:#f0f0f0;transform:scaleX(.948);transform-origin:0 0">User: azureuser</div>
<div class="a" style="left:394px;top:413.4px;font-family:'Liberation Mono',monospace;font-size:9.9px;font-weight:700;line-height:14px;color:#f0f0f0;transform:scaleX(.948);transform-origin:0 0">Date: 09/11/2023 06:48:16</div>


<!-- cursor -->
<svg class="a" style="left:576px;top:479px" width="13" height="16" viewBox="0 0 13 16"><path d="M1 1.2V12.6L3.7 10.2 5.5 14 7.2 13.2 5.4 9.6H9.9Z" fill="#fff" stroke="#000" stroke-width=".6" stroke-linejoin="round"/></svg>

<!-- annotations -->
<svg class="a" style="left:0;top:0" width="1024" height="528">
  <defs>
    <marker id="ah" markerWidth="8" markerHeight="8" refX="5.5" refY="2.75" orient="auto" markerUnits="userSpaceOnUse"><path d="M0 0L6 2.75 0 5.5Z" fill="#f21a1a"/></marker>
    <filter id="sh" x="-5%" y="-5%" width="110%" height="110%"><feGaussianBlur stdDeviation=".5"/></filter>
  </defs>
  <g stroke="#808080" stroke-width="1.2" fill="none" opacity=".45" filter="url(#sh)">
    <line x1="179" y1="180.5" x2="219.5" y2="235"/>
    <line x1="212" y1="332" x2="138" y2="417.5"/>
    <line x1="341.5" y1="385.5" x2="372" y2="340"/>
  </g>
  <line x1="643.6" y1="447.3" x2="553" y2="419.6" stroke="#6a6a6a" stroke-width="1.7" filter="url(#sh)"/>
  <g stroke="#f21a1a" stroke-width="1.25" fill="none">
    <line x1="178.4" y1="179.7" x2="219.6" y2="234.5" marker-end="url(#ah)"/>
    <line x1="211.4" y1="331" x2="137.2" y2="416.8" marker-end="url(#ah)"/>
    <line x1="340.7" y1="384.8" x2="372.4" y2="338.8" marker-end="url(#ah)"/>
    <line x1="643.6" y1="445.8" x2="547.5" y2="415.8" marker-end="url(#ah)" stroke-width="1.9"/>
  </g>
  <g fill="#7d0a0a">
    <circle cx="172.9" cy="173.4" r="8"/>
    <circle cx="216" cy="323.6" r="7.6"/>
    <circle cx="335.6" cy="391.7" r="8"/>
    <circle cx="651.6" cy="446.4" r="7.6"/>
  </g>
  <g fill="#fff" font-family="Liberation Sans" font-size="9.5" text-anchor="middle">
    <text x="172.9" y="176.9">2</text>
    <text x="216" y="327" font-weight="700" font-size="9">1</text>
    <text x="335.6" y="395.1">3</text>
    <text x="651.6" y="449.7" font-size="9">4</text>
  </g>
</svg>
</body></html>
